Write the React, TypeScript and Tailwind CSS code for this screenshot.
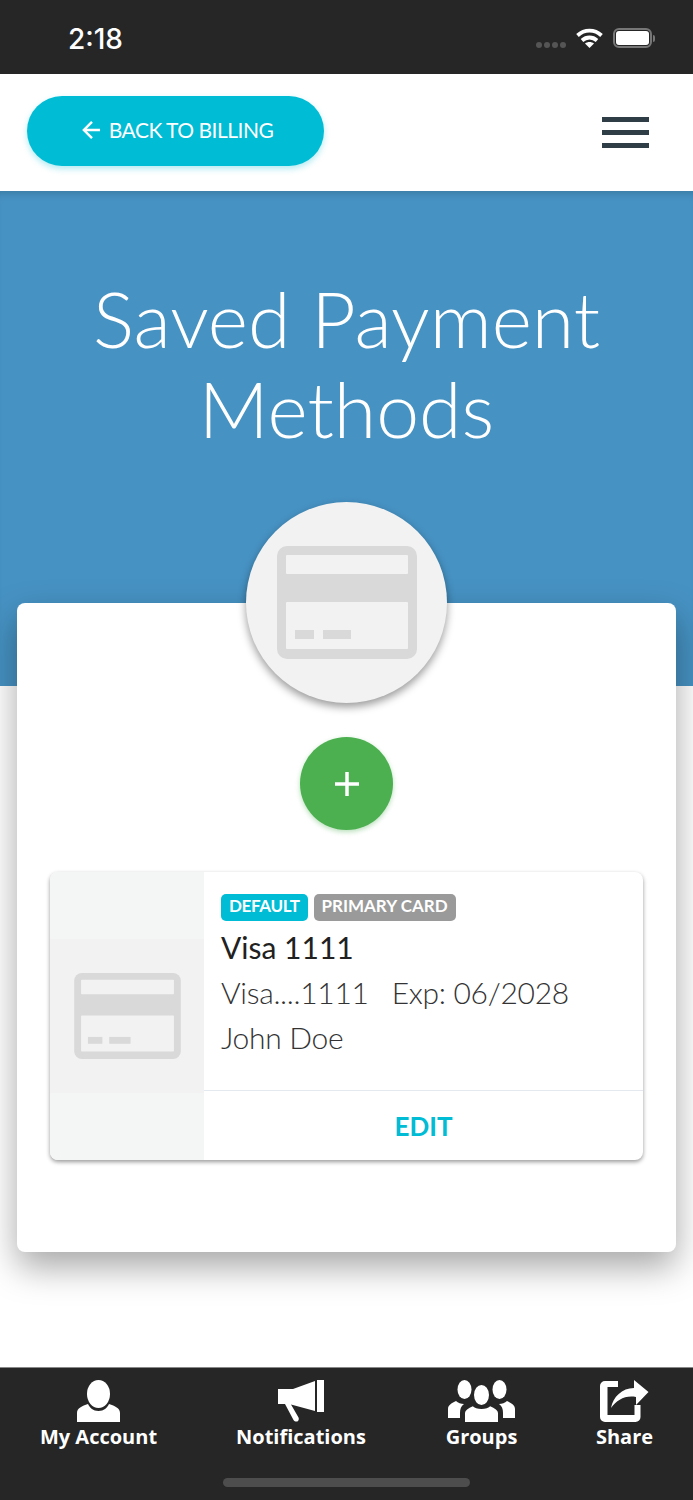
const lato = { fontFamily: "Lato, sans-serif" };

function CardIcon({ className }: { className: string }) {
  return (
    <svg viewBox="0 0 140 113" className={className}>
      <rect x="0" y="0" width="140" height="113" rx="10" fill="#d9d9d9" />
      <rect x="9" y="9" width="122" height="19" rx="1" fill="#f2f2f2" />
      <rect x="9" y="56" width="122" height="47" rx="1" fill="#f2f2f2" />
      <rect x="18" y="84" width="19" height="9" fill="#d9d9d9" />
      <rect x="46" y="84" width="28" height="9" fill="#d9d9d9" />
    </svg>
  );
}

function PersonIcon() {
  return (
    <svg viewBox="0 0 43 42" className="h-[42px] w-[43px]" fill="#fff">
      <ellipse cx="21.5" cy="14" rx="11.500" ry="14" />
      <path d="M0 42v-9c0-5 5-7 11-9 2 4 5 7 10.500 7s8.500-3 10.500-7c6 2 11 4 11 9v9z" />
    </svg>
  );
}

function MegaphoneIcon() {
  return (
    <svg viewBox="0 0 46 42" className="h-[42px] w-[46px]" fill="#fff">
      <path d="M0 9h15L37 1v30L13 24.500l7.500 13c1.500 4-3 5.500-5 2.500L7 24H0z" />
      <rect x="39" y="0" width="7" height="32" />
    </svg>
  );
}

function GroupIcon() {
  return (
    <svg viewBox="0 0 67 42" className="h-[42px] w-[67px]" fill="#fff">
      <ellipse cx="16.500" cy="9.500" rx="7" ry="9.500" />
      <ellipse cx="51.500" cy="9.500" rx="7" ry="9.500" />
      <path d="M0 38v-9c0-4 4-6 8-8 2 2 5 3 8 3-3 2-4 5-4 9v5z" />
      <path d="M67 38v-9c0-4-4-6-8-8-2 2-5 3-8 3 3 2 4 5 4 9v5z" />
      <g stroke="#262626" strokeWidth="2">
        <ellipse cx="33.500" cy="15" rx="8.500" ry="11" />
        <path d="M16 43V33c0-4 4-6 9-8 2 2 5 3 8.500 3s6.500-1 8.500-3c5 2 9 4 9 8v10z" />
      </g>
    </svg>
  );
}

function ShareIcon() {
  return (
    <svg viewBox="0 0 49 42" className="h-[42px] w-[49px]" fill="#fff">
      <path d="M5 1h13v6H7.500v28h27V25h6v12a5 5 0 0 1-5 5H5a5 5 0 0 1-5-5V6a5 5 0 0 1 5-5z" />
      <path d="M34 0l14.500 12L36 25v-8c-11-2-19 3-25 11 2-11 11-20 23-20z" />
    </svg>
  );
}

function TabItem({ icon, label, className }: { icon: React.ReactNode; label: string; className: string }) {
  return (
    <div className={`flex flex-col items-center ${className}`}>
      {icon}
      <span className="mt-[1px] text-[20px] leading-[28px] font-bold whitespace-nowrap text-white" style={{ fontFamily: "'Open Sans', sans-serif" }}>
        {label}
      </span>
    </div>
  );
}

export default function App() {
  return (
    <div className="flex h-[1500px] w-[693px] flex-col overflow-hidden bg-white" style={lato}>
      {/* status bar */}
      <div className="flex h-[74px] shrink-0 items-center justify-between bg-[#262626] pr-[38px] pl-[68px]">
        <span className="mt-[3px] text-[28px] font-medium text-white" style={{ fontFamily: "Inter, sans-serif" }}>
          2:18
        </span>
        <div className="mt-[2px] flex items-center">
          <div className="mt-[14px] mr-[10px] flex gap-[2px]">
            <span className="h-[6px] w-[6px] rounded-full bg-[#555]" />
            <span className="h-[6px] w-[6px] rounded-full bg-[#555]" />
            <span className="h-[6px] w-[6px] rounded-full bg-[#555]" />
            <span className="h-[6px] w-[6px] rounded-full bg-[#555]" />
          </div>
          <svg viewBox="0 0 27 20" className="mr-[10px] h-[20px] w-[27px]" fill="none" stroke="#fff" strokeWidth="3.800">
            <path d="M1.500 7.500c7-6.500 17-6.500 24 0" />
            <path d="M6 12.500c4.500-4 10.500-4 15 0" />
            <path d="M13.500 20l-4.500-4.500c2.500-2 6.500-2 9 0z" fill="#fff" stroke="none" />
          </svg>
          <div className="flex items-center">
            <div className="flex h-[20px] w-[39px] items-center justify-center rounded-[6px] border-2 border-[#777]">
              <div className="h-[14px] w-[33px] rounded-[3px] bg-white" />
            </div>
            <div className="ml-[1px] h-[7px] w-[2px] rounded-r bg-[#777]" />
          </div>
        </div>
      </div>

      {/* header */}
      <div className="flex h-[117px] shrink-0 items-center justify-between pr-[44px] pl-[27px]">
        <button className="mb-[4px] flex h-[70px] w-[297px] items-center justify-center rounded-full bg-[#00bcd4] pb-[1px] pl-[4px] text-[21px] text-white shadow-[0_3px_6px_rgba(0,188,212,0.3)]">
          <svg viewBox="0 0 20 20" className="mr-[8px] h-[20px] w-[19px]" fill="none" stroke="#fff" strokeWidth="2.600">
            <path d="M19 10H2M10.500 1.500L2 10l8.500 8.500" />
          </svg>
          <span className="tracking-[-0.5px]">BACK TO BILLING</span>
        </button>
        <div className="flex w-[47px] flex-col gap-[8px]">
          <span className="h-[5px] bg-[#2f3e46]" />
          <span className="h-[5px] bg-[#2f3e46]" />
          <span className="h-[5px] bg-[#2f3e46]" />
        </div>
      </div>

      {/* hero */}
      <div className="h-[495px] shrink-0 bg-[#4692c3] pt-[82px] text-center shadow-[inset_0_8px_8px_-6px_rgba(0,0,0,0.18)]">
        <h1 className="text-[77px] leading-[90px] font-light text-white">
          Saved Payment
          <br />
          Methods
        </h1>
      </div>

      {/* main card */}
      <div className="relative mx-[17px] mt-[-83px] flex h-[649px] shrink-0 flex-col items-center rounded-[8px] bg-white px-[33px] shadow-[0_15px_35px_rgba(0,0,0,0.35)]">
        <div className="mt-[-101px] flex h-[201px] w-[201px] items-center justify-center rounded-full bg-[#f2f2f2] shadow-[0_4px_8px_rgba(0,0,0,0.4)]">
          <CardIcon className="h-[113px] w-[140px]" />
        </div>
        <button className="mt-[34px] flex h-[93px] w-[93px] items-center justify-center rounded-full bg-[#4caf50] shadow-[0_2px_5px_rgba(76,175,80,0.4)]">
          <svg viewBox="0 0 24 24" className="h-[24px] w-[24px]" fill="none" stroke="#fff" strokeWidth="3.500">
            <path d="M12 0v24M0 12h24" />
          </svg>
        </button>

        <div className="mt-[42px] flex h-[288px] w-full overflow-hidden rounded-[8px] bg-white shadow-[0_2px_4px_rgba(0,0,0,0.4)]">
          <div className="flex w-[154px] shrink-0 items-center bg-[#f4f5f5]">
            <div className="flex h-[154px] w-full items-center justify-center bg-[#f2f2f2]">
              <CardIcon className="h-[86px] w-[107px]" />
            </div>
          </div>
          <div className="flex min-w-0 flex-1 flex-col">
            <div className="h-[219px] border-b border-[#e3e9ef] pt-[22px] pl-[17px]">
              <div className="flex gap-[6px]">
                <span className="flex h-[27px] items-center rounded-[5px] bg-[#00bcd4] px-[8px] pb-[3px] text-[17px] font-bold tracking-[-0.35px] text-white">
                  DEFAULT
                </span>
                <span className="flex h-[27px] items-center rounded-[5px] bg-[#9a9a9a] px-[8px] pb-[3px] text-[17px] font-bold text-white">
                  PRIMARY CARD
                </span>
              </div>
              <div className="mt-[8px] text-[30px] leading-[36px] font-normal text-[#212121]">Visa 1111</div>
              <div className="mt-[9px] flex text-[30px] leading-[36px] font-light tracking-[-0.3px] text-[#333]">
                <span>Visa....1111</span>
                <span className="ml-[23px]">Exp: 06/2028</span>
              </div>
              <div className="mt-[9px] text-[30px] leading-[36px] font-light tracking-[-0.3px] text-[#333]">John Doe</div>
            </div>
            <div className="flex flex-1 items-center justify-center pt-[1px] text-[26px] font-bold text-[#00bcd4]">EDIT</div>
          </div>
        </div>
      </div>

      {/* tab bar */}
      <div className="relative mt-auto h-[133px] shrink-0 border-t border-[#888] bg-[#262626]">
        <div className="flex pt-[12px]">
          <TabItem icon={<PersonIcon />} label="My Account" className="ml-[39px] w-[119px]" />
          <TabItem icon={<MegaphoneIcon />} label="Notifications" className="ml-[78px] w-[130px]" />
          <TabItem icon={<GroupIcon />} label="Groups" className="ml-[80px] w-[71px]" />
          <TabItem icon={<ShareIcon />} label="Share" className="ml-[79px] w-[57px]" />
        </div>
        <div className="absolute bottom-[13px] left-[223px] h-[9px] w-[247px] rounded-full bg-[#4d4d4d]" />
      </div>
    </div>
  );
}
